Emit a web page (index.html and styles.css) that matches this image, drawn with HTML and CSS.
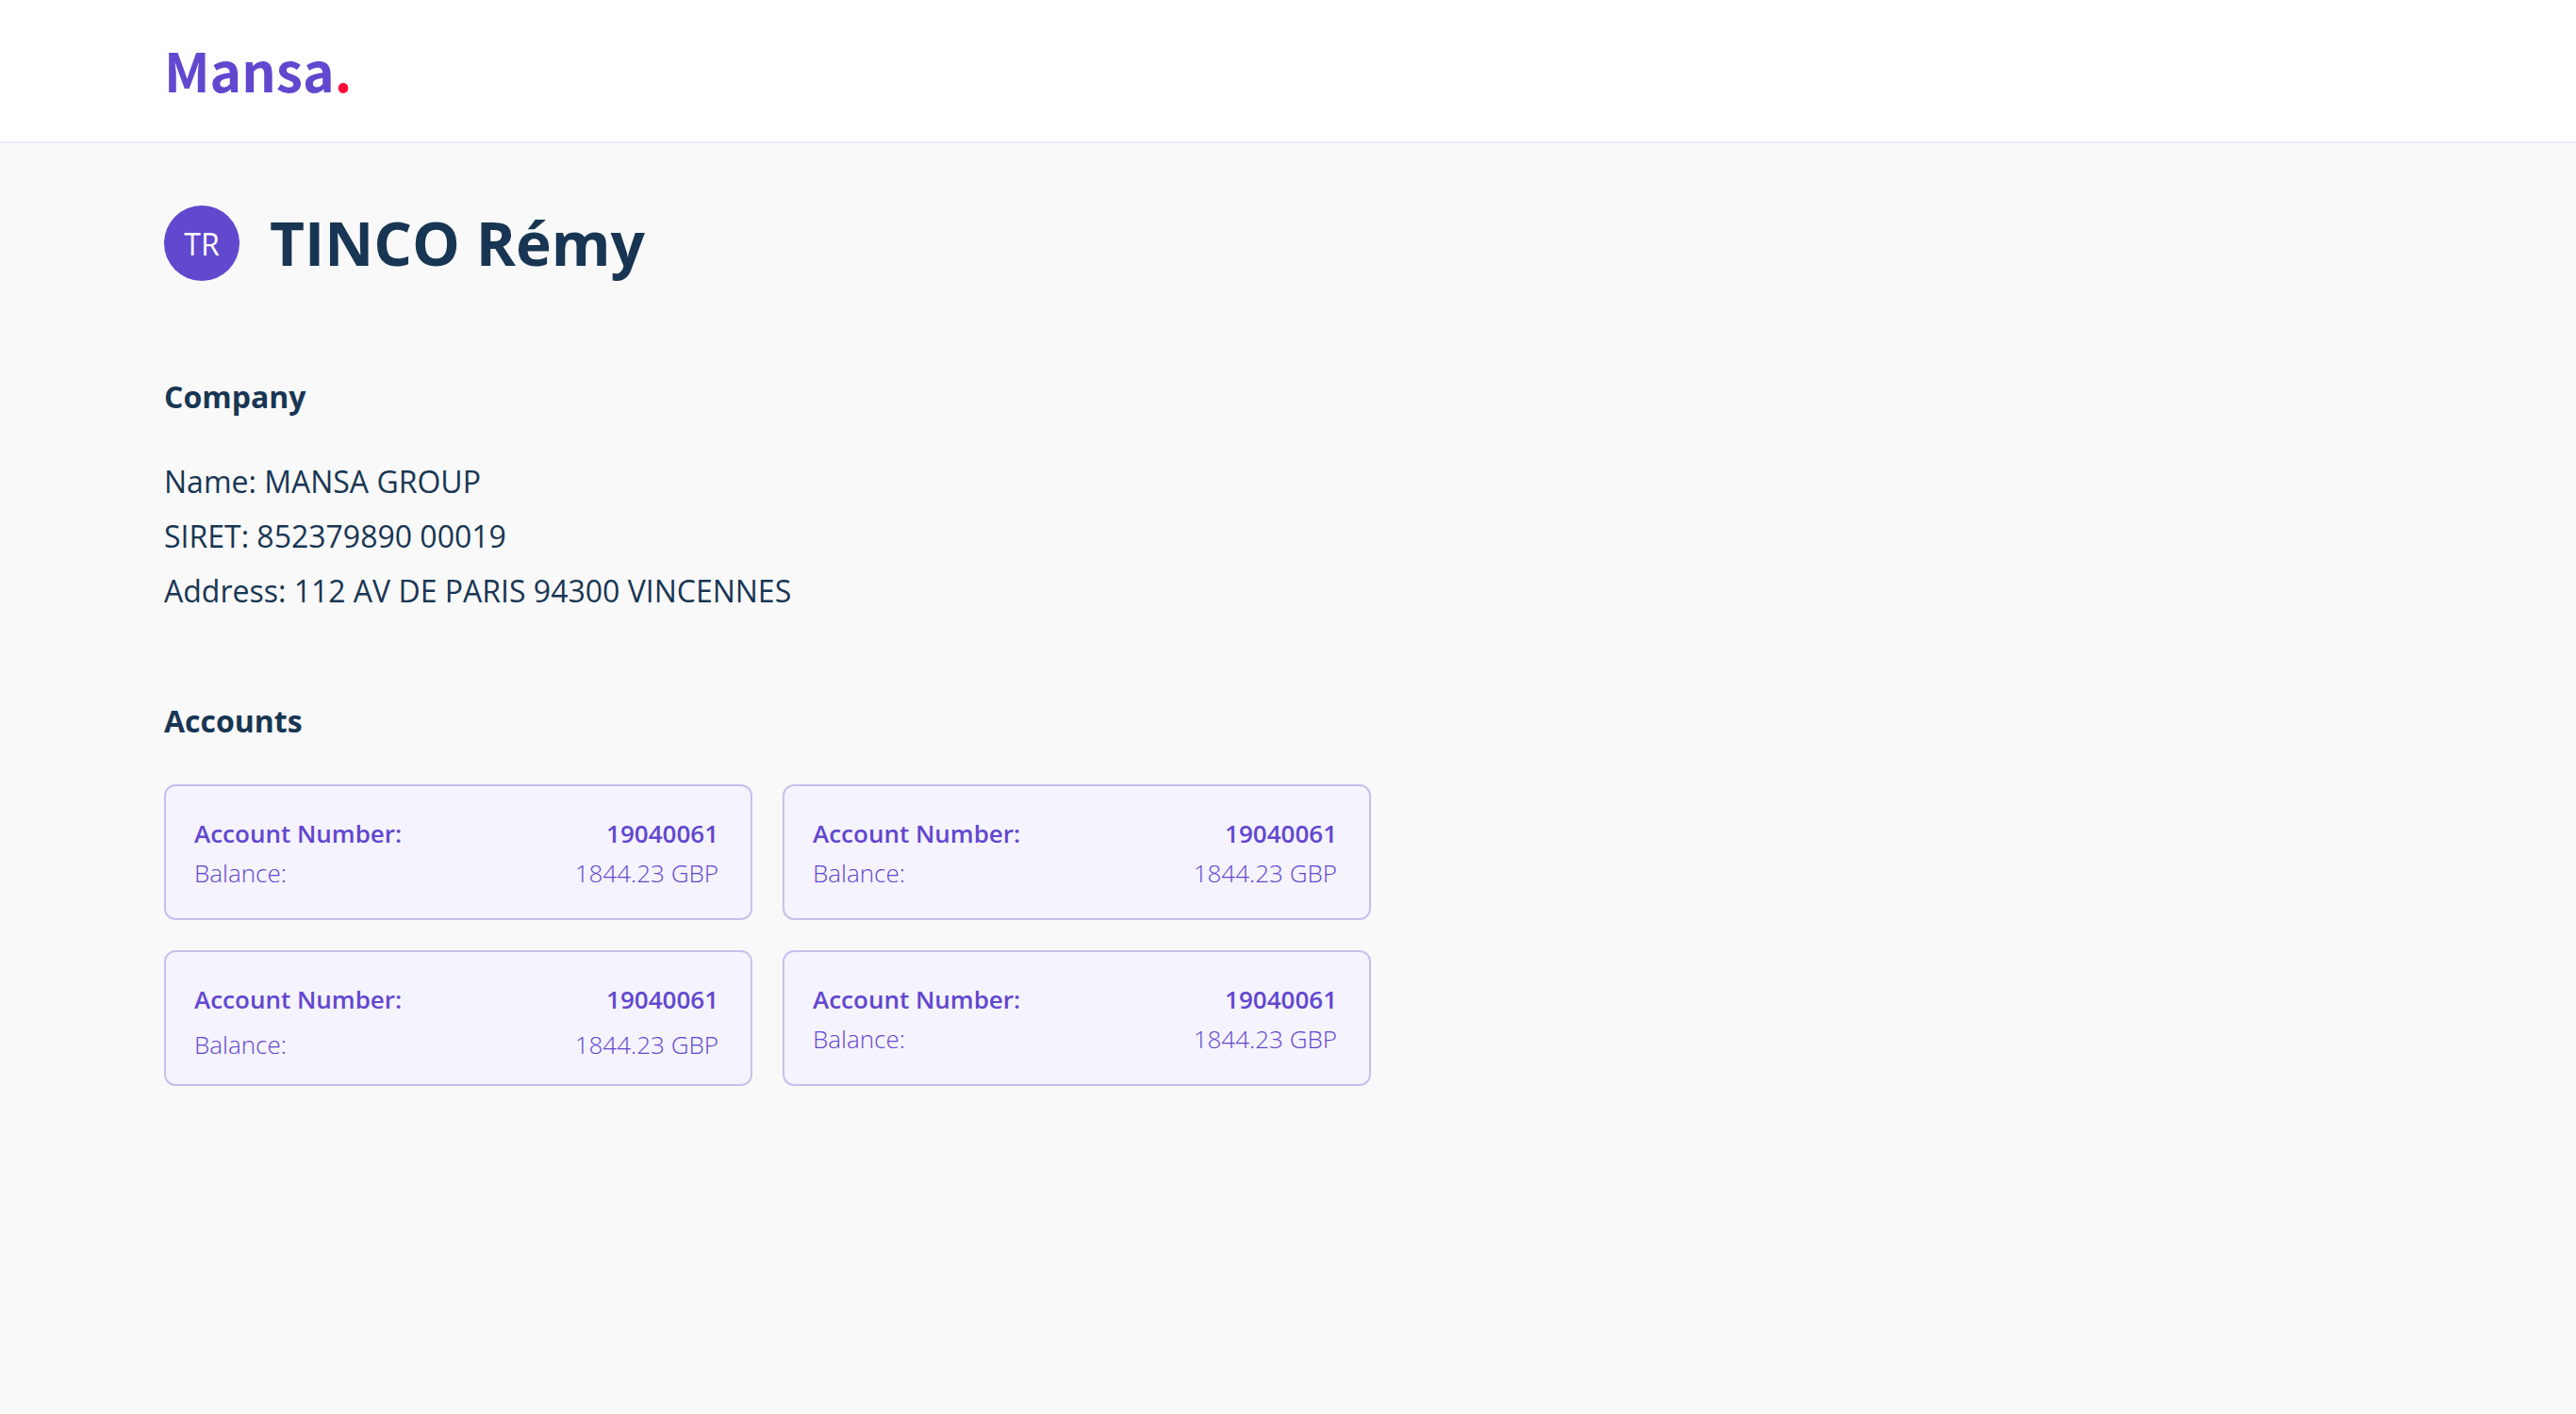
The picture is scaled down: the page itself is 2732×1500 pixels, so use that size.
FILE: index.html
```html
<!DOCTYPE html>
<html lang="en">
<head>
<meta charset="utf-8">
<meta name="viewport" content="width=device-width, initial-scale=1">
<title>Mansa</title>
<link rel="stylesheet" href="styles.css">
</head>
<body>
<header class="topbar">
  <div class="logo">Mansa<span class="logo-dot">.</span></div>
</header>
<main class="page">
  <div class="profile">
    <span class="avatar">TR</span>
    <h1 class="profile-name">TINCO Rémy</h1>
  </div>
  <section class="company">
    <h2 class="section-title">Company</h2>
    <p class="company-line">Name: MANSA GROUP</p>
    <p class="company-line">SIRET: 852379890 00019</p>
    <p class="company-line">Address: 112 AV DE PARIS 94300 VINCENNES</p>
  </section>
  <section class="accounts">
    <h2 class="section-title">Accounts</h2>
    <div class="account-grid">
      <article class="card">
        <p class="row row-number"><span>Account Number:</span><span>19040061</span></p>
        <p class="row row-balance"><span>Balance:</span><span>1844.23 GBP</span></p>
      </article>
      <article class="card">
        <p class="row row-number"><span>Account Number:</span><span>19040061</span></p>
        <p class="row row-balance"><span>Balance:</span><span>1844.23 GBP</span></p>
      </article>
      <article class="card card-spaced">
        <p class="row row-number"><span>Account Number:</span><span>19040061</span></p>
        <p class="row row-balance"><span>Balance:</span><span>1844.23 GBP</span></p>
      </article>
      <article class="card">
        <p class="row row-number"><span>Account Number:</span><span>19040061</span></p>
        <p class="row row-balance"><span>Balance:</span><span>1844.23 GBP</span></p>
      </article>
    </div>
  </section>
</main>
</body>
</html>
```
FILE: styles.css
```css
* {
  box-sizing: border-box;
}

body {
  margin: 0;
  min-height: 100vh;
  background: #f9f9f9;
  color: #183653;
  font-family: "Open Sans", sans-serif;
}

h1, h2, p {
  margin: 0;
}

.topbar {
  display: flex;
  align-items: center;
  padding: 33px 174px 37px;
  background: #fff;
  border-bottom: 2px solid #ebe9fb;
}

.logo {
  color: #6247cf;
  font-family: "Noto Sans CJK SC", sans-serif;
  font-size: 57px;
  font-weight: 700;
  line-height: 80px;
}

.logo-dot {
  color: #ff0a3a;
}

.page {
  padding: 66px 174px;
}

.profile {
  display: flex;
  align-items: center;
  gap: 32px;
  margin-bottom: 94px;
}

.avatar {
  display: flex;
  align-items: center;
  justify-content: center;
  width: 80px;
  height: 80px;
  border-radius: 50%;
  background: #6247cf;
  color: #fff;
  font-size: 32px;
}

.profile-name {
  font-size: 64px;
  font-weight: 700;
  line-height: 80px;
}

.section-title {
  margin-bottom: 32px;
  font-size: 32px;
  font-weight: 700;
  line-height: 58px;
}

.company {
  margin-bottom: 80px;
}

.company-line {
  font-size: 32px;
  line-height: 58px;
}

.account-grid {
  display: grid;
  grid-template-columns: repeat(2, 1fr);
  gap: 32px;
  max-width: 1280px;
  padding-top: 6px;
}

.card {
  min-height: 144px;
  padding: 29px 34px 20px 30px;
  border: 2px solid #c8bfee;
  border-radius: 12px;
  background: #f5f3fd;
  color: #6247cf;
}

.row {
  display: flex;
  justify-content: space-between;
  font-size: 26px;
  line-height: 42px;
}

.row-number {
  font-weight: 600;
}

.row-balance {
  font-weight: 300;
}

.card-spaced .row-balance {
  margin-top: 6px;
}
```
